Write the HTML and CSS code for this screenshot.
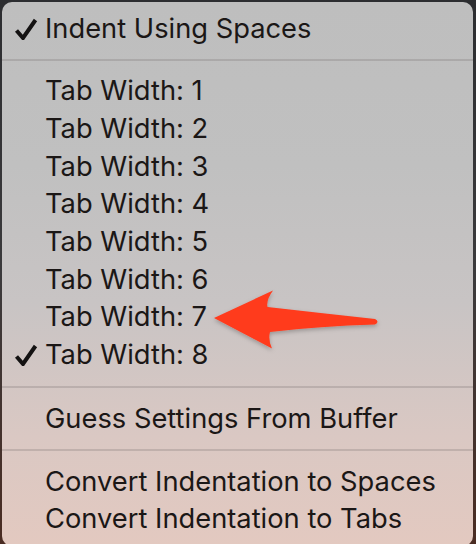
FILE: index.html
```html
<!DOCTYPE html>
<html>
<head>
<meta charset="utf-8">
<link rel="stylesheet" href="styles.css">
</head>
<body>
<div class="menu">
  <div class="item"><svg class="check" width="24" height="22" viewBox="0 0 24 22"><path d="M2.5,12.5 L9,20 L21.5,2" fill="none" stroke="#141212" stroke-width="4" stroke-linejoin="miter"/></svg>Indent Using Spaces</div>
  <div class="sep"></div>
  <div class="item">Tab Width: 1</div>
  <div class="item">Tab Width: 2</div>
  <div class="item">Tab Width: 3</div>
  <div class="item">Tab Width: 4</div>
  <div class="item">Tab Width: 5</div>
  <div class="item">Tab Width: 6</div>
  <div class="item">Tab Width: 7</div>
  <div class="item"><svg class="check" width="24" height="22" viewBox="0 0 24 22"><path d="M2.5,12.5 L9,20 L21.5,2" fill="none" stroke="#141212" stroke-width="4" stroke-linejoin="miter"/></svg>Tab Width: 8</div>
  <div class="sep sep2"></div>
  <div class="item">Guess Settings From Buffer</div>
  <div class="sep"></div>
  <div class="item">Convert Indentation to Spaces</div>
  <div class="item">Convert Indentation to Tabs</div>
</div>
<svg class="arrow" width="476" height="544" viewBox="0 0 476 544">
  <defs>
    <filter id="sh" x="-20%" y="-40%" width="140%" height="180%">
      <feDropShadow dx="0" dy="2" stdDeviation="2" flood-color="#000" flood-opacity="0.25"/>
    </filter>
  </defs>
  <path filter="url(#sh)" fill="#ff3a1c" d="M214,318 L273,290.5 Q266,300 267.5,307 Q320,313 375,319 Q380,321.5 375,324.5 Q320,326 270,332 Q268,340 272,348.5 Z"/>
</svg>
</body>
</html>
```
FILE: styles.css
```css
html, body {
  margin: 0;
  padding: 0;
  width: 476px;
  height: 544px;
  overflow: hidden;
}
body {
  background: linear-gradient(180deg, #2c2d30 0%, #3b3a3c 50%, #4a2c22 100%);
  position: relative;
  font-family: Inter, "Noto Sans", sans-serif;
}
.menu {
  margin: 2px 3px 0 2px;
  height: 544px;
  border-radius: 10px;
  background: linear-gradient(180deg, #bebebe 0%, #c0c0c0 30%, #c8c4c4 55%, #dac8c3 80%, #e3c9c0 100%);
  padding-top: 7.5px;
  box-sizing: border-box;
  color: #1b1716;
}
.item {
  height: 37.7px;
  line-height: 37.7px;
  font-size: 27.3px;
  padding-left: 43px;
  position: relative;
  white-space: nowrap;
}
.check {
  position: absolute;
  left: 12px;
  top: 8px;
}
.sep {
  height: 25px;
  display: flex;
  align-items: center;
}
.sep::before {
  content: "";
  display: block;
  width: 100%;
  height: 2px;
  background: rgba(110, 105, 105, 0.25);
}
.sep2 {
  height: 26.4px;
}
.arrow {
  position: absolute;
  left: 0;
  top: 0;
  pointer-events: none;
}
```
